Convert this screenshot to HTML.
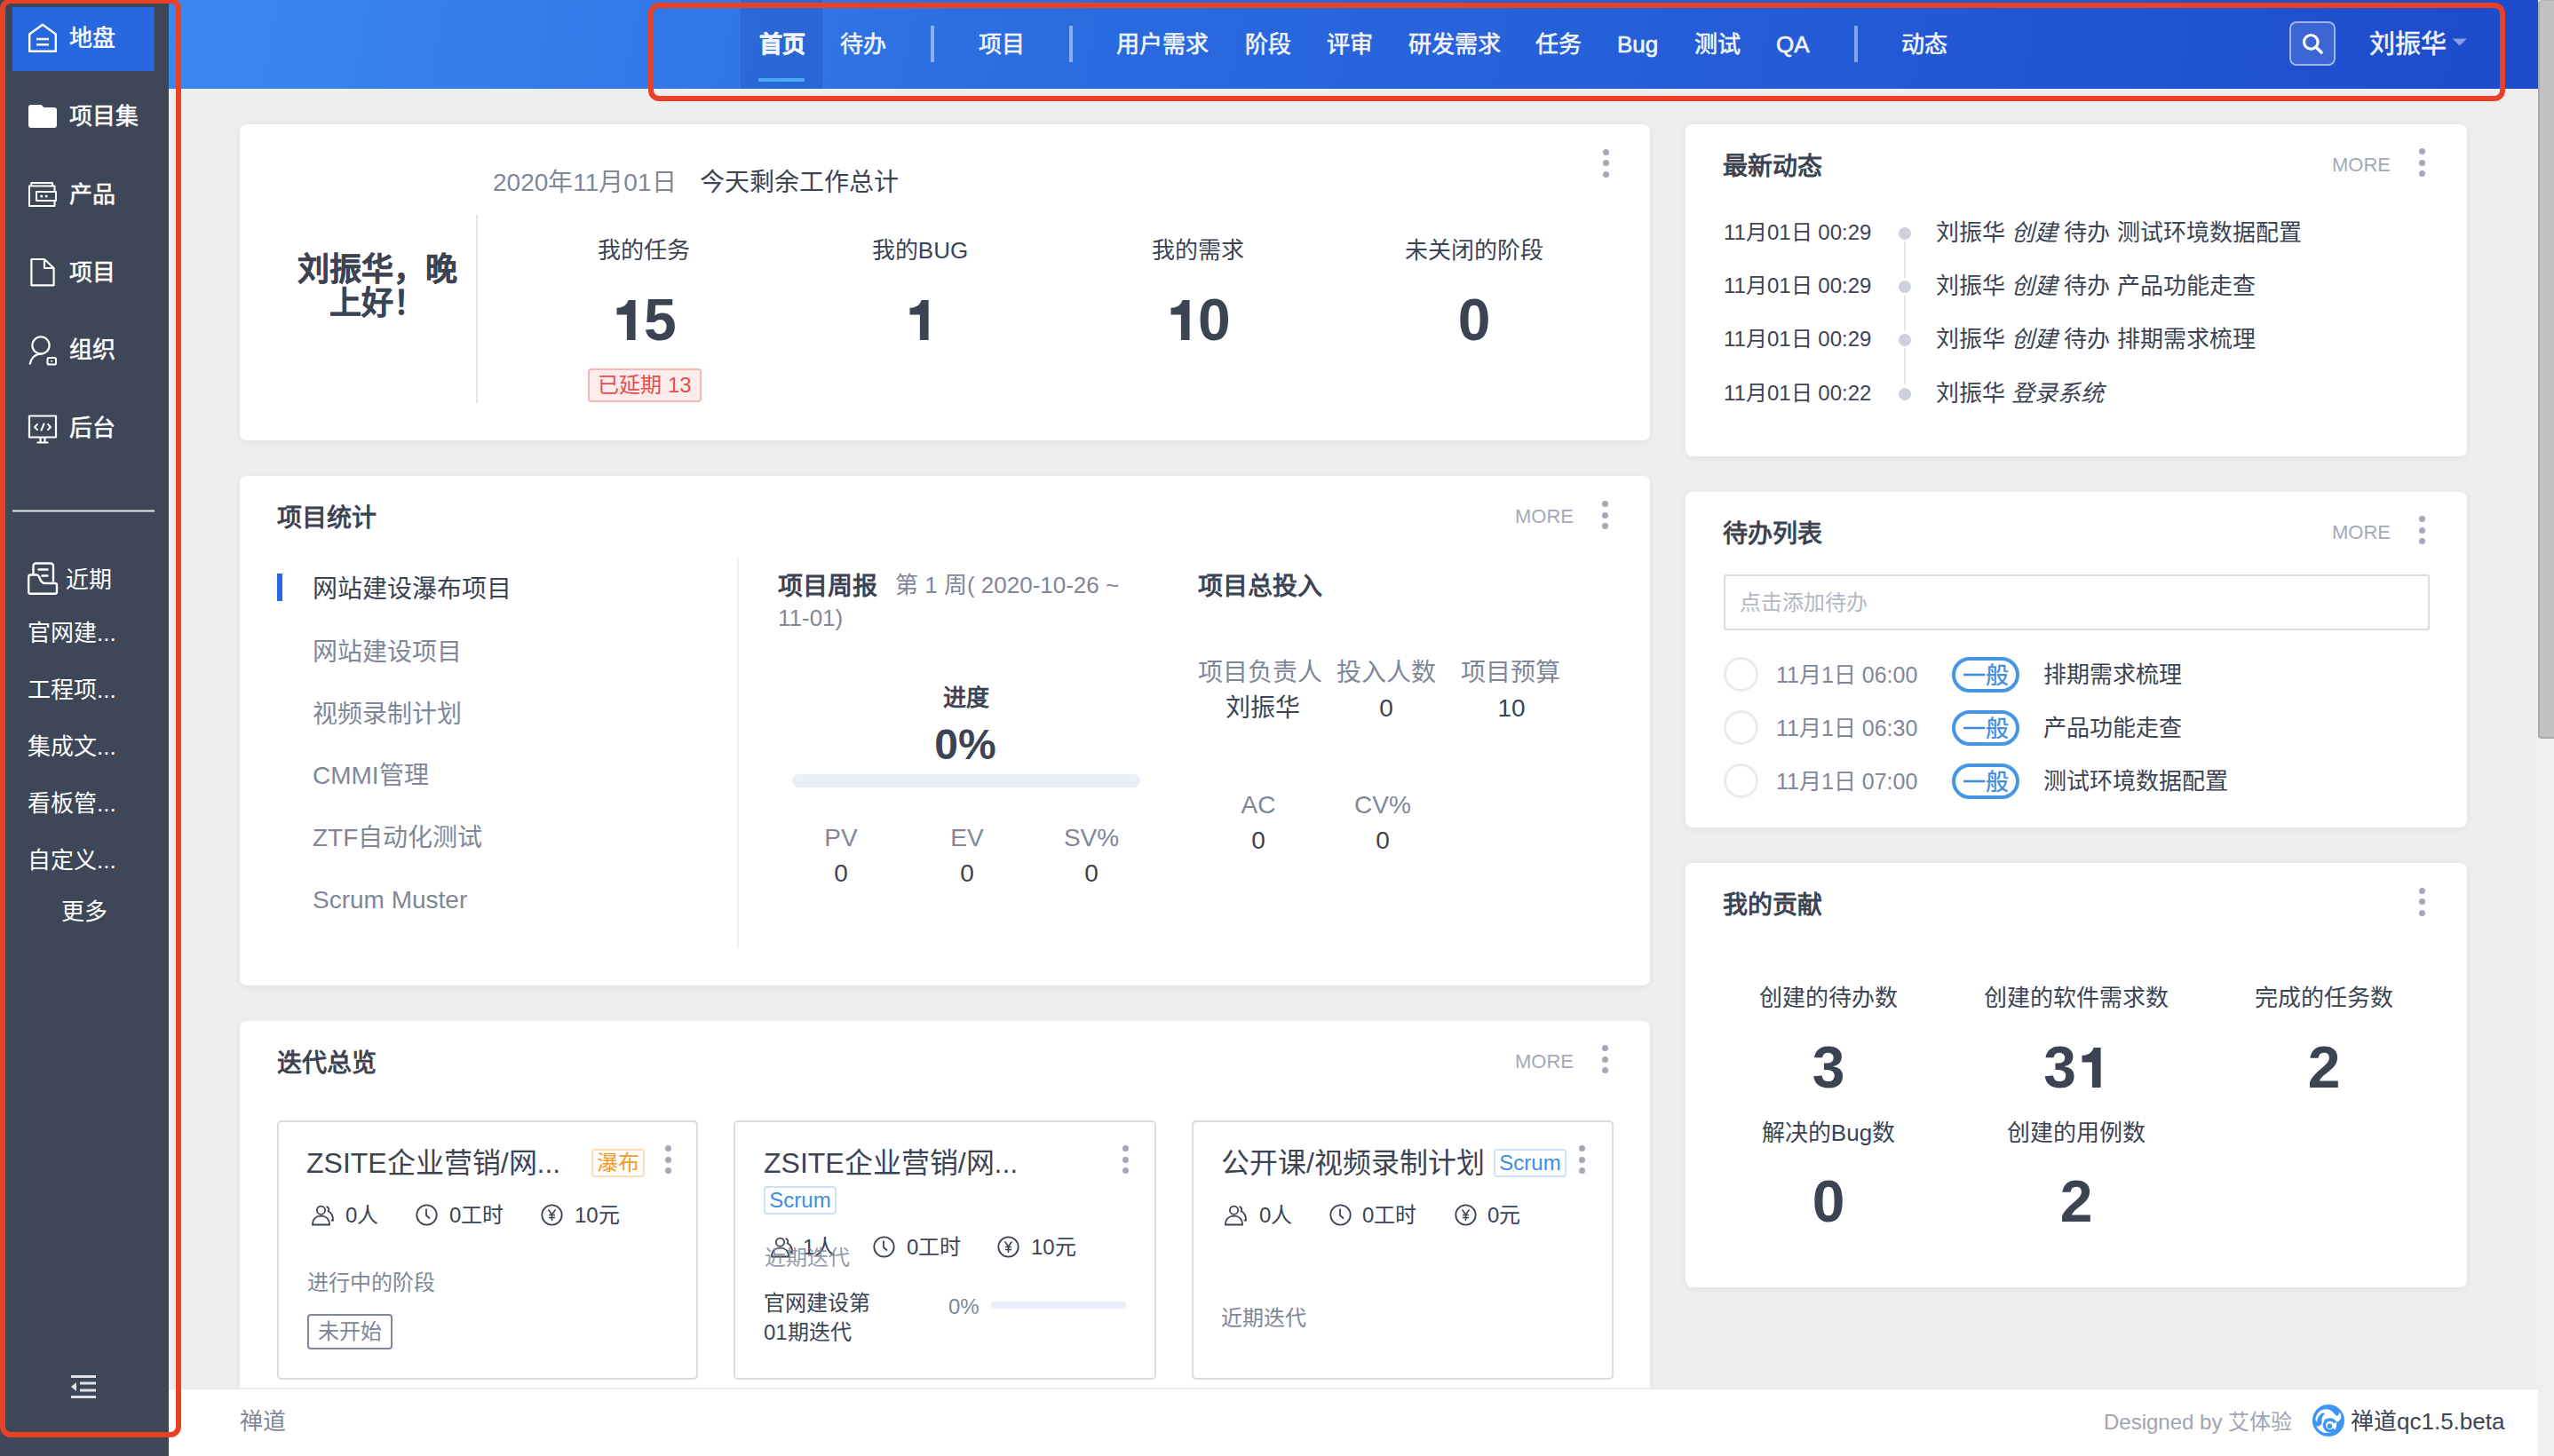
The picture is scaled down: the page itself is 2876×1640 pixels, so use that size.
<!DOCTYPE html>
<html lang="zh-CN"><head><meta charset="utf-8">
<style>
*{box-sizing:border-box;margin:0;padding:0}
html,body{width:2876px;height:1640px;overflow:hidden;background:#eeeeee;font-family:"Liberation Sans",sans-serif;color:#3c4353}
.a{position:absolute}
#side{left:0;top:0;width:190px;height:1640px;background:#3e4757}
#hdr{left:190px;top:0;width:2668px;height:100px;background:linear-gradient(100deg,#3b88ef 0%,#2a6ae0 40%,#1c4bcb 100%)}
#foot{left:190px;top:1563px;width:2668px;height:77px;background:#fff;border-top:2px solid #e9ecf1}
#sb{left:2858px;top:0;width:18px;height:1640px;background:#efefef}
#thumb{left:2858px;top:0;width:18px;height:832px;background:#c1c1c1;border-left:2px solid #a9a9a9;border-bottom:2px solid #a9a9a9;border-top:1px solid #b5b5b5;border-radius:5px 0 0 4px}
.red{border:6px solid #ea4126;border-radius:12px}
.sitem{left:0;width:190px;height:72px;color:#fff;font-size:26px;font-weight:500}
.sitem .ic{position:absolute;left:32px;top:50%;transform:translateY(-50%)}
.sitem .tx{position:absolute;left:78px;top:50%;transform:translateY(-50%);line-height:30px;white-space:nowrap}
.nav{top:0;height:100px;line-height:100px;color:#f4f6fc;font-size:26px;-webkit-text-stroke:0.6px #f4f6fc;white-space:nowrap}
.nsep{top:29px;width:4px;height:41px;background:rgba(255,255,255,.45)}
.card{background:#fff;border-radius:8px;box-shadow:0 2px 10px rgba(0,0,0,.06)}
.kebab{width:7px}
.kebab i{display:block;width:7px;height:7px;border-radius:50%;background:#a4a9b8;margin-bottom:5.5px}
.more{font-size:22px;color:#a4a9b8;letter-spacing:0px}
.ttl{font-size:28px;font-weight:bold;color:#3c4353;white-space:nowrap;padding-top:2px}
.t{white-space:nowrap}
.one{width:36.7px;height:45.5px;vertical-align:baseline;display:inline-block}
.tlr{font-size:26px;line-height:36px;color:#3c4353}
.tld{font-size:24px;line-height:36px;color:#3c4353}
.icard{border:2px solid #dcdcdc;border-radius:5px;background:#fff}
.ititle{font-size:32px;line-height:40px;color:#3c4353}
.ir{font-size:24px;line-height:36px;color:#3c4353}
.pli{font-size:28px;line-height:40px;color:#7f8798}
.glab{font-size:28px;line-height:36px;text-align:center;color:#7f8798}
.dval{font-size:28px;line-height:36px;text-align:center;color:#3c4353}
.lab{font-size:26px;line-height:36px;text-align:center;color:#3c4353;padding-top:1px}
.big{font-size:66px;line-height:80px;font-weight:bold;text-align:center;color:#3c4353}
</style></head><body>
<div id="side" class="a"></div>
<div id="hdr" class="a"></div>
<div id="sb" class="a"></div>
<div id="thumb" class="a"></div>

<!-- sidebar -->
<div class="a" style="left:14px;top:8px;width:160px;height:72px;background:#2767e0"></div>


<!-- sidebar items -->
<svg class="a" style="left:0;top:0" width="190" height="1640" viewBox="0 0 190 1640" fill="none" stroke="#fff" stroke-width="2.4" stroke-linejoin="round">
 <!-- house -->
 <path d="M33.2 38.5 L48 27.8 L62.8 38.5 V57.8 H33.2 Z"/>
 <path d="M41 44 H55 M41 50.2 H55"/>
 <!-- folder -->
 <path d="M35 118 H46.5 L49.5 121 H61 A3 3 0 0 1 64 124 V141 A3 3 0 0 1 61 144 H35 A3 3 0 0 1 32 141 V121 A3 3 0 0 1 35 118 Z" fill="#fff" stroke="none"/>
 <!-- product -->
 <path d="M35.2 209.2 V206 H59 V209.2" stroke-width="2"/>
 <path d="M61.5 216 V209.5 H33 V232 H61.5 V226" stroke-width="2"/>
 <rect x="41" y="216" width="22" height="10" stroke-width="2"/>
 <circle cx="46.8" cy="221" r="1.5" fill="#fff" stroke="none"/>
 <circle cx="52.1" cy="221" r="1.5" fill="#fff" stroke="none"/>
 <!-- doc -->
 <path d="M35.4 292 H50 L60.6 302 V321.4 H35.4 Z M50 292 V302 H60.6" stroke-width="2.2"/>
 <!-- person -->
 <circle cx="46" cy="389" r="9.6" stroke-width="2.2"/>
 <path d="M33.5 410.5 C34.5 404 39 398.8 46 398.6" stroke-width="2.2"/>
 <rect x="53.5" y="403" width="9.5" height="7.5" rx="1.6" stroke-width="2"/>
 <circle cx="58.2" cy="406.8" r="1" fill="#fff" stroke="none"/>
 <!-- monitor -->
 <rect x="33" y="468.5" width="30" height="24" stroke-width="2.2"/>
 <path d="M45.5 493 V498 M50.5 493 V498 M41.5 498.5 H54.5" stroke-width="2.2"/>
 <path d="M42 478 L39 481 L42 484 M54 478 L57 481 L54 484 M49.5 477.5 L46.5 484.5" stroke-width="2" stroke-linecap="round"/>
 <!-- separator -->
 <path d="M14 575.5 H174" stroke-width="2" stroke="#e6e8ec"/>
 <!-- recent icon -->
 <path d="M37.5 647.5 V637.5 A3 3 0 0 1 40.5 634.5 H57 A3 3 0 0 1 60 637.5 V655.5" stroke-width="2.4"/>
 <path d="M34.5 647.5 H41 C43 647.5 44 649 45 652 C46 655 48 657 51 657 H62 A2 2 0 0 1 64 659 V666.5 A2 2 0 0 1 62 668.8 H34.5 A2 2 0 0 1 32.2 666.5 V650 A2.5 2.5 0 0 1 34.5 647.5 Z" stroke-width="2.4"/>
 <path d="M43.5 641.5 H53.5 M47.5 648.5 H53.5" stroke-width="2.4" stroke-linecap="round"/>
 <!-- collapse -->
 <path d="M80 1550.5 H108 M90 1558 H108 M90 1566 H108 M80 1573.5 H108" stroke="#e0e2e6" stroke-width="3"/>
 <path d="M80 1562 L86 1557 V1567 Z" fill="#e0e2e6" stroke="none"/>
</svg>
<div class="a t" style="left:78px;top:28px;font-size:26px;line-height:30px;color:#fff;-webkit-text-stroke:0.5px #fff">地盘</div>
<div class="a t" style="left:78px;top:116px;font-size:26px;line-height:30px;color:#fff;-webkit-text-stroke:0.5px #fff">项目集</div>
<div class="a t" style="left:78px;top:204px;font-size:26px;line-height:30px;color:#fff;-webkit-text-stroke:0.5px #fff">产品</div>
<div class="a t" style="left:78px;top:292px;font-size:26px;line-height:30px;color:#fff;-webkit-text-stroke:0.5px #fff">项目</div>
<div class="a t" style="left:78px;top:379px;font-size:26px;line-height:30px;color:#fff;-webkit-text-stroke:0.5px #fff">组织</div>
<div class="a t" style="left:78px;top:467px;font-size:26px;line-height:30px;color:#fff;-webkit-text-stroke:0.5px #fff">后台</div>
<div class="a t" style="left:74px;top:638px;font-size:26px;line-height:30px;color:#fff">近期</div>
<div class="a t" style="left:31px;top:698px;font-size:26px;line-height:30px;color:#fff">官网建...</div>
<div class="a t" style="left:31px;top:762px;font-size:26px;line-height:30px;color:#fff">工程项...</div>
<div class="a t" style="left:31px;top:826px;font-size:26px;line-height:30px;color:#fff">集成文...</div>
<div class="a t" style="left:31px;top:890px;font-size:26px;line-height:30px;color:#fff">看板管...</div>
<div class="a t" style="left:31px;top:954px;font-size:26px;line-height:30px;color:#fff">自定义...</div>
<div class="a t" style="left:69px;top:1012px;font-size:26px;line-height:30px;color:#fff">更多</div>


<!-- header nav -->
<div class="a" style="left:834px;top:0;width:92px;height:100px;background:rgba(20,60,160,.22)"></div>
<div class="a" style="left:854px;top:88px;width:52px;height:4px;background:#4aa8f7"></div>
<div class="a t nav" style="left:855px;font-weight:bold">首页</div>
<div class="a t nav" style="left:946px">待办</div>
<div class="a nsep" style="left:1048px"></div>
<div class="a t nav" style="left:1102px">项目</div>
<div class="a nsep" style="left:1204px"></div>
<div class="a t nav" style="left:1257px">用户需求</div>
<div class="a t nav" style="left:1402px">阶段</div>
<div class="a t nav" style="left:1494px">评审</div>
<div class="a t nav" style="left:1586px">研发需求</div>
<div class="a t nav" style="left:1729px">任务</div>
<div class="a t nav" style="left:1821px">Bug</div>
<div class="a t nav" style="left:1908px">测试</div>
<div class="a t nav" style="left:2000px">QA</div>
<div class="a nsep" style="left:2088px"></div>
<div class="a t nav" style="left:2141px">动态</div>
<div class="a" style="left:2578px;top:24px;width:52px;height:50px;border:2px solid rgba(255,255,255,.5);border-radius:8px;background:rgba(255,255,255,.13)"></div>
<svg class="a" style="left:2578px;top:24px" width="52" height="50" viewBox="0 0 52 50"><circle cx="24.3" cy="23.3" r="7.8" fill="none" stroke="#fff" stroke-width="3.2"/><path d="M29.8 29 L36 35" stroke="#fff" stroke-width="3.6" stroke-linecap="round"/></svg>
<div class="a t nav" style="left:2668px;font-size:29px;color:#eef1fb">刘振华</div>
<svg class="a" style="left:2761px;top:43px" width="18" height="9" viewBox="0 0 18 9"><path d="M0.5 0.5 H17 L8.75 8.5 Z" fill="rgba(255,255,255,.45)"/></svg>


<!-- card 1 -->
<div class="a card" style="left:270px;top:140px;width:1588px;height:356px"></div>
<div class="a t" style="left:555px;top:188px;font-size:28px;line-height:36px;color:#7f8798">2020年11月01日</div>
<div class="a t" style="left:788px;top:188px;font-size:28px;line-height:36px;color:#3c4353">今天剩余工作总计</div>
<div class="a kebab" style="left:1804.5px;top:167.5px"><i></i><i></i><i></i></div>
<div class="a" style="left:330px;top:285px;width:190px;font-size:36px;line-height:38px;font-weight:bold;text-align:center;color:#3c4353;-webkit-text-stroke:0.4px #3c4353">刘振华，晚上好！</div>
<div class="a" style="left:536px;top:242px;width:2px;height:212px;background:#e4e6eb"></div>
<div class="a t lab" style="left:625px;top:263px;width:200px">我的任务</div>
<div class="a t lab" style="left:936px;top:263px;width:200px">我的BUG</div>
<div class="a t lab" style="left:1249px;top:263px;width:200px">我的需求</div>
<div class="a t lab" style="left:1560px;top:263px;width:200px">未关闭的阶段</div>
<div class="a t big" style="left:625px;top:320px;width:200px"><svg class="one" viewBox="0 0 36.7 45.5"><path d="M19.6 0 H27.6 V45.5 H17.9 V16.6 H6.5 V8.8 C12.8 8.8 17.8 6 19.6 0 Z" fill="#3c4353"/></svg>5</div>
<div class="a t big" style="left:936px;top:320px;width:200px"><svg class="one" viewBox="0 0 36.7 45.5"><path d="M19.6 0 H27.6 V45.5 H17.9 V16.6 H6.5 V8.8 C12.8 8.8 17.8 6 19.6 0 Z" fill="#3c4353"/></svg></div>
<div class="a t big" style="left:1249px;top:320px;width:200px"><svg class="one" viewBox="0 0 36.7 45.5"><path d="M19.6 0 H27.6 V45.5 H17.9 V16.6 H6.5 V8.8 C12.8 8.8 17.8 6 19.6 0 Z" fill="#3c4353"/></svg>0</div>
<div class="a t big" style="left:1560px;top:320px;width:200px">0</div>
<div class="a t" style="left:662px;top:415px;width:128px;height:38px;line-height:34px;text-align:center;font-size:24px;color:#e84d4d;background:#fdecec;border:2px solid #f6b6b6;border-radius:4px">已延期 13</div>


<!-- card 2 -->
<div class="a card" style="left:270px;top:536px;width:1588px;height:574px"></div>
<div class="a t ttl" style="left:312px;top:562px;line-height:40px">项目统计</div>
<div class="a t more" style="left:1706px;top:568px;line-height:28px">MORE</div>
<div class="a kebab" style="left:1804px;top:564px"><i></i><i></i><i></i></div>
<div class="a" style="left:312px;top:646px;width:6px;height:31px;background:#2767e0"></div>
<div class="a t pli" style="left:352px;top:644px;color:#3c4353">网站建设瀑布项目</div>
<div class="a t pli" style="left:352px;top:715px">网站建设项目</div>
<div class="a t pli" style="left:352px;top:785px">视频录制计划</div>
<div class="a t pli" style="left:352px;top:854px">CMMI管理</div>
<div class="a t pli" style="left:352px;top:924px">ZTF自动化测试</div>
<div class="a t pli" style="left:352px;top:994px">Scrum Muster</div>
<div class="a" style="left:830px;top:628px;width:2px;height:440px;background:#eef0f4"></div>
<div class="a t ttl" style="left:876px;top:639px;line-height:40px">项目周报</div>
<div class="a t" style="left:1008px;top:641px;font-size:26px;line-height:37px;color:#7f8798">第 1 周( 2020-10-26 ~<br><span style="margin-left:-132px">11-01)</span></div>
<div class="a t" style="left:988px;top:768px;width:200px;text-align:center;font-size:26px;line-height:36px;font-weight:bold;color:#3c4353">进度</div>
<div class="a t" style="left:987px;top:811px;width:200px;text-align:center;font-size:48px;line-height:56px;font-weight:bold;color:#3c4353">0%</div>
<div class="a" style="left:892px;top:872px;width:392px;height:15px;border-radius:8px;background:#e9eff8"></div>
<div class="a t glab" style="left:847px;top:926px;width:200px">PV</div>
<div class="a t glab" style="left:989px;top:926px;width:200px">EV</div>
<div class="a t glab" style="left:1129px;top:926px;width:200px">SV%</div>
<div class="a t dval" style="left:847px;top:966px;width:200px">0</div>
<div class="a t dval" style="left:989px;top:966px;width:200px">0</div>
<div class="a t dval" style="left:1129px;top:966px;width:200px">0</div>
<div class="a t ttl" style="left:1349px;top:639px;line-height:40px">项目总投入</div>
<div class="a t glab" style="left:1319px;top:740px;width:200px">项目负责人</div>
<div class="a t glab" style="left:1461px;top:740px;width:200px">投入人数</div>
<div class="a t glab" style="left:1601px;top:740px;width:200px">项目预算</div>
<div class="a t dval" style="left:1322px;top:780px;width:200px">刘振华</div>
<div class="a t dval" style="left:1461px;top:780px;width:200px">0</div>
<div class="a t dval" style="left:1602px;top:780px;width:200px">10</div>
<div class="a t glab" style="left:1317px;top:889px;width:200px">AC</div>
<div class="a t glab" style="left:1457px;top:889px;width:200px">CV%</div>
<div class="a t dval" style="left:1317px;top:929px;width:200px">0</div>
<div class="a t dval" style="left:1457px;top:929px;width:200px">0</div>


<!-- card 3 -->
<div class="a card" style="left:270px;top:1150px;width:1588px;height:500px"></div>
<div class="a t ttl" style="left:312px;top:1176px;line-height:40px">迭代总览</div>
<div class="a t more" style="left:1706px;top:1182px;line-height:28px">MORE</div>
<div class="a kebab" style="left:1804px;top:1177px"><i></i><i></i><i></i></div>
<div class="a icard" style="left:312px;top:1262px;width:474px;height:292px"></div>
<div class="a icard" style="left:826px;top:1262px;width:476px;height:292px"></div>
<div class="a icard" style="left:1342px;top:1262px;width:475px;height:292px"></div>
<div class="a t ititle" style="left:345px;top:1290px">ZSITE企业营销/网...</div>
<div class="a t" style="left:666px;top:1294px;width:60px;height:32px;line-height:28px;text-align:center;font-size:24px;color:#f39b2b;background:#fff;border:2px solid #fbdcb5;border-radius:4px">瀑布</div>
<div class="a kebab" style="left:749px;top:1290px"><i></i><i></i><i></i></div>
<svg class="a" style="left:351px;top:1357px" width="26" height="24" viewBox="0 0 26 24" fill="none" stroke="#3c4353" stroke-width="1.8"><circle cx="10.5" cy="6.2" r="4.6"/><path d="M1 22.5 C1 16 5 12.6 10.5 12.6 C16 12.6 20 16 20 22.5 Z"/><path d="M16.5 2.2 C19 2.6 20 5 18.7 7.3 C22 8.8 24 12 24 17.5 H21.8"/></svg><div class="a t ir" style="left:389px;top:1351px">0人</div><svg class="a" style="left:468px;top:1356px" width="25" height="25" viewBox="0 0 25 25" fill="none" stroke="#3c4353" stroke-width="1.8"><circle cx="12.5" cy="12.5" r="11.2"/><path d="M12 5.5 V13 L16 16.5"/></svg><div class="a t ir" style="left:506px;top:1351px">0工时</div><svg class="a" style="left:609px;top:1356px" width="25" height="25" viewBox="0 0 25 25" fill="none" stroke="#3c4353" stroke-width="1.8"><circle cx="12.5" cy="12.5" r="11.2"/><path d="M8.5 6.5 L12.5 12 L16.5 6.5 M12.5 12 V19 M9 12.5 H16 M9 15.5 H16" stroke-width="1.6"/></svg><div class="a t ir" style="left:647px;top:1351px">10元</div>
<div class="a t" style="left:346px;top:1427px;font-size:24px;line-height:36px;color:#7f8798">进行中的阶段</div>
<div class="a t" style="left:346px;top:1480px;width:96px;height:40px;line-height:36px;text-align:center;font-size:24px;color:#7f8798;border:2px solid #7f8798;border-radius:4px">未开始</div>

<div class="a t ititle" style="left:860px;top:1290px">ZSITE企业营销/网...</div>
<div class="a t" style="left:860px;top:1336px;width:82px;height:32px;line-height:28px;text-align:center;font-size:24px;color:#3a8ee6;background:#fff;border:2px solid #cde2f9;border-radius:4px">Scrum</div>
<div class="a kebab" style="left:1264px;top:1290px"><i></i><i></i><i></i></div>
<svg class="a" style="left:868px;top:1393px" width="26" height="24" viewBox="0 0 26 24" fill="none" stroke="#3c4353" stroke-width="1.8"><circle cx="10.5" cy="6.2" r="4.6"/><path d="M1 22.5 C1 16 5 12.6 10.5 12.6 C16 12.6 20 16 20 22.5 Z"/><path d="M16.5 2.2 C19 2.6 20 5 18.7 7.3 C22 8.8 24 12 24 17.5 H21.8"/></svg><div class="a t ir" style="left:904px;top:1387px">1人</div><svg class="a" style="left:983px;top:1392px" width="25" height="25" viewBox="0 0 25 25" fill="none" stroke="#3c4353" stroke-width="1.8"><circle cx="12.5" cy="12.5" r="11.2"/><path d="M12 5.5 V13 L16 16.5"/></svg><div class="a t ir" style="left:1021px;top:1387px">0工时</div><svg class="a" style="left:1123px;top:1392px" width="25" height="25" viewBox="0 0 25 25" fill="none" stroke="#3c4353" stroke-width="1.8"><circle cx="12.5" cy="12.5" r="11.2"/><path d="M8.5 6.5 L12.5 12 L16.5 6.5 M12.5 12 V19 M9 12.5 H16 M9 15.5 H16" stroke-width="1.6"/></svg><div class="a t ir" style="left:1161px;top:1387px">10元</div>
<div class="a t" style="left:861px;top:1399px;font-size:24px;line-height:36px;color:rgba(127,135,152,.85)">近期迭代</div>
<div class="a" style="left:860px;top:1451px;font-size:24px;line-height:33px;color:#3c4353">官网建设第<br>01期迭代</div>
<div class="a t" style="left:1068px;top:1454px;font-size:24px;line-height:36px;color:#7f8798">0%</div>
<div class="a" style="left:1116px;top:1466px;width:152px;height:8px;border-radius:4px;background:#e9eff8"></div>

<div class="a t ititle" style="left:1375px;top:1290px">公开课/视频录制计划</div>
<div class="a t" style="left:1682px;top:1294px;width:82px;height:32px;line-height:28px;text-align:center;font-size:24px;color:#3a8ee6;background:#fff;border:2px solid #cde2f9;border-radius:4px">Scrum</div>
<div class="a kebab" style="left:1778px;top:1290px"><i></i><i></i><i></i></div>
<svg class="a" style="left:1379px;top:1357px" width="26" height="24" viewBox="0 0 26 24" fill="none" stroke="#3c4353" stroke-width="1.8"><circle cx="10.5" cy="6.2" r="4.6"/><path d="M1 22.5 C1 16 5 12.6 10.5 12.6 C16 12.6 20 16 20 22.5 Z"/><path d="M16.5 2.2 C19 2.6 20 5 18.7 7.3 C22 8.8 24 12 24 17.5 H21.8"/></svg><div class="a t ir" style="left:1418px;top:1351px">0人</div><svg class="a" style="left:1497px;top:1356px" width="25" height="25" viewBox="0 0 25 25" fill="none" stroke="#3c4353" stroke-width="1.8"><circle cx="12.5" cy="12.5" r="11.2"/><path d="M12 5.5 V13 L16 16.5"/></svg><div class="a t ir" style="left:1534px;top:1351px">0工时</div><svg class="a" style="left:1638px;top:1356px" width="25" height="25" viewBox="0 0 25 25" fill="none" stroke="#3c4353" stroke-width="1.8"><circle cx="12.5" cy="12.5" r="11.2"/><path d="M8.5 6.5 L12.5 12 L16.5 6.5 M12.5 12 V19 M9 12.5 H16 M9 15.5 H16" stroke-width="1.6"/></svg><div class="a t ir" style="left:1675px;top:1351px">0元</div>
<div class="a t" style="left:1375px;top:1467px;font-size:24px;line-height:36px;color:#7f8798">近期迭代</div>


<!-- right col -->
<div class="a card" style="left:1898px;top:140px;width:880px;height:374px"></div>
<div class="a t ttl" style="left:1940px;top:166px;line-height:40px">最新动态</div>
<div class="a t more" style="left:2626px;top:172px;line-height:28px">MORE</div>
<div class="a kebab" style="left:2724px;top:167px"><i></i><i></i><i></i></div>
<div class="a t tld" style="left:1941px;top:244.0px">11月01日 00:29</div>
<div class="a" style="left:2138px;top:256.0px;width:14px;height:14px;border-radius:50%;background:#cdd1dc"></div>
<div class="a t tlr" style="left:2180px;top:244.0px">刘振华 <i>创建</i> 待办 测试环境数据配置</div>
<div class="a" style="left:2144px;top:272.0px;width:2px;height:41.0px;background:#e6e8ed"></div>
<div class="a t tld" style="left:1941px;top:304.2px">11月01日 00:29</div>
<div class="a" style="left:2138px;top:316.2px;width:14px;height:14px;border-radius:50%;background:#cdd1dc"></div>
<div class="a t tlr" style="left:2180px;top:304.2px">刘振华 <i>创建</i> 待办 产品功能走查</div>
<div class="a" style="left:2144px;top:332.2px;width:2px;height:41.0px;background:#e6e8ed"></div>
<div class="a t tld" style="left:1941px;top:364.4px">11月01日 00:29</div>
<div class="a" style="left:2138px;top:376.4px;width:14px;height:14px;border-radius:50%;background:#cdd1dc"></div>
<div class="a t tlr" style="left:2180px;top:364.4px">刘振华 <i>创建</i> 待办 排期需求梳理</div>
<div class="a" style="left:2144px;top:392.4px;width:2px;height:41.0px;background:#e6e8ed"></div>
<div class="a t tld" style="left:1941px;top:424.6px">11月01日 00:22</div>
<div class="a" style="left:2138px;top:436.6px;width:14px;height:14px;border-radius:50%;background:#cdd1dc"></div>
<div class="a t tlr" style="left:2180px;top:424.6px">刘振华 <i>登录系统</i></div>

<div class="a card" style="left:1898px;top:554px;width:880px;height:378px"></div>
<div class="a t ttl" style="left:1940px;top:580px;line-height:40px">待办列表</div>
<div class="a t more" style="left:2626px;top:586px;line-height:28px">MORE</div>
<div class="a kebab" style="left:2724px;top:581px"><i></i><i></i><i></i></div>
<div class="a t" style="left:1941px;top:647px;width:795px;height:63px;border:2px solid #dcdcdc;border-radius:3px;padding-left:16px;font-size:24px;line-height:59px;color:#b3b8c3">点击添加待办</div>
<div class="a" style="left:1941px;top:740.2px;width:39px;height:39px;border-radius:50%;border:3px solid #ebebeb"></div>
<div class="a t" style="left:2000px;top:741.7px;font-size:25px;line-height:36px;color:#7f8798">11月1日 06:00</div>
<div class="a t" style="left:2198px;top:739.7px;width:76px;height:40px;border-radius:20px;border:4px solid #4795e5;color:#3f8be0;font-size:26px;line-height:34px;text-align:center;-webkit-text-stroke:0.3px #3f8be0;padding-right:1px">一般</div>
<div class="a t" style="left:2301px;top:741.7px;font-size:26px;line-height:36px;color:#3c4353">排期需求梳理</div>
<div class="a" style="left:1941px;top:800.2px;width:39px;height:39px;border-radius:50%;border:3px solid #ebebeb"></div>
<div class="a t" style="left:2000px;top:801.7px;font-size:25px;line-height:36px;color:#7f8798">11月1日 06:30</div>
<div class="a t" style="left:2198px;top:799.7px;width:76px;height:40px;border-radius:20px;border:4px solid #4795e5;color:#3f8be0;font-size:26px;line-height:34px;text-align:center;-webkit-text-stroke:0.3px #3f8be0;padding-right:1px">一般</div>
<div class="a t" style="left:2301px;top:801.7px;font-size:26px;line-height:36px;color:#3c4353">产品功能走查</div>
<div class="a" style="left:1941px;top:860.2px;width:39px;height:39px;border-radius:50%;border:3px solid #ebebeb"></div>
<div class="a t" style="left:2000px;top:861.7px;font-size:25px;line-height:36px;color:#7f8798">11月1日 07:00</div>
<div class="a t" style="left:2198px;top:859.7px;width:76px;height:40px;border-radius:20px;border:4px solid #4795e5;color:#3f8be0;font-size:26px;line-height:34px;text-align:center;-webkit-text-stroke:0.3px #3f8be0;padding-right:1px">一般</div>
<div class="a t" style="left:2301px;top:861.7px;font-size:26px;line-height:36px;color:#3c4353">测试环境数据配置</div>

<div class="a card" style="left:1898px;top:972px;width:880px;height:478px"></div>
<div class="a t ttl" style="left:1940px;top:998px;line-height:40px">我的贡献</div>
<div class="a kebab" style="left:2724px;top:999.5px"><i></i><i></i><i></i></div>
<div class="a t lab" style="left:1909px;top:1105px;width:300px">创建的待办数</div>
<div class="a t lab" style="left:2188px;top:1105px;width:300px">创建的软件需求数</div>
<div class="a t lab" style="left:2467px;top:1105px;width:300px">完成的任务数</div>
<div class="a t big" style="left:1909px;top:1162px;width:300px">3</div>
<div class="a t big" style="left:2188px;top:1162px;width:300px">3<svg class="one" viewBox="0 0 36.7 45.5"><path d="M19.6 0 H27.6 V45.5 H17.9 V16.6 H6.5 V8.8 C12.8 8.8 17.8 6 19.6 0 Z" fill="#3c4353"/></svg></div>
<div class="a t big" style="left:2467px;top:1162px;width:300px">2</div>
<div class="a t lab" style="left:1909px;top:1257px;width:300px">解决的Bug数</div>
<div class="a t lab" style="left:2188px;top:1257px;width:300px">创建的用例数</div>
<div class="a t big" style="left:1909px;top:1313px;width:300px">0</div>
<div class="a t big" style="left:2188px;top:1313px;width:300px">2</div>
<div id="foot" class="a"></div>

<div class="a t" style="left:270px;top:1583px;font-size:26px;line-height:36px;color:#7f8798">禅道</div>
<div class="a t" style="left:2369px;top:1584px;font-size:24px;line-height:36px;color:#a0a5b1">Designed by 艾体验</div>
<svg class="a" style="left:2604px;top:1582px" width="36" height="36" viewBox="0 0 36 36"><circle cx="18" cy="18" r="18" fill="#3d96f3"/><path d="M3.4 17.2 C3.8 10.5 8.6 5.3 15.2 5.2 C19.8 5.1 22.6 7.8 25.3 11 C27 13 28.8 14.6 30.8 8.6 C33.2 12.5 32.6 17 29.6 18.7 C28.3 19.4 27.4 19.5 26.6 19.6 C27.6 21.4 27.4 25.5 25.5 28.2 C22.8 31.6 18.5 32.3 15 32 C10 31.5 6.4 28 4.4 24.2 C6 24.6 7.6 24.6 8.3 23.4 Z" fill="#fff"/><path d="M11.6 9.6 C13.2 9 14.2 10.6 13 11.6 C11 13.4 10.3 15.8 10.6 18.5 C10.9 21 10.4 23 8.4 23.6 C6.8 22.5 5.5 21 5.2 17.3 C6.4 14 8.4 11 11.6 9.6 Z" fill="#3d96f3"/><path d="M25.6 20.6 A6.4 6.4 0 1 0 24.4 27.8" fill="none" stroke="#3d96f3" stroke-width="3.4"/><circle cx="19.4" cy="24.3" r="2.8" fill="#3d96f3"/><path d="M12.5 17.5 C16 15 21 15.2 26.6 19.6 L22 19 Z" fill="#3d96f3"/></svg>
<div class="a t" style="left:2647px;top:1583px;font-size:26px;line-height:36px;color:#3c4353">禅道qc1.5.beta</div>

<!-- red outlines -->
<div class="a red" style="left:0;top:-2px;width:204px;height:1621px"></div>
<div class="a red" style="left:730px;top:3px;width:2091px;height:111px"></div>
</body></html>
